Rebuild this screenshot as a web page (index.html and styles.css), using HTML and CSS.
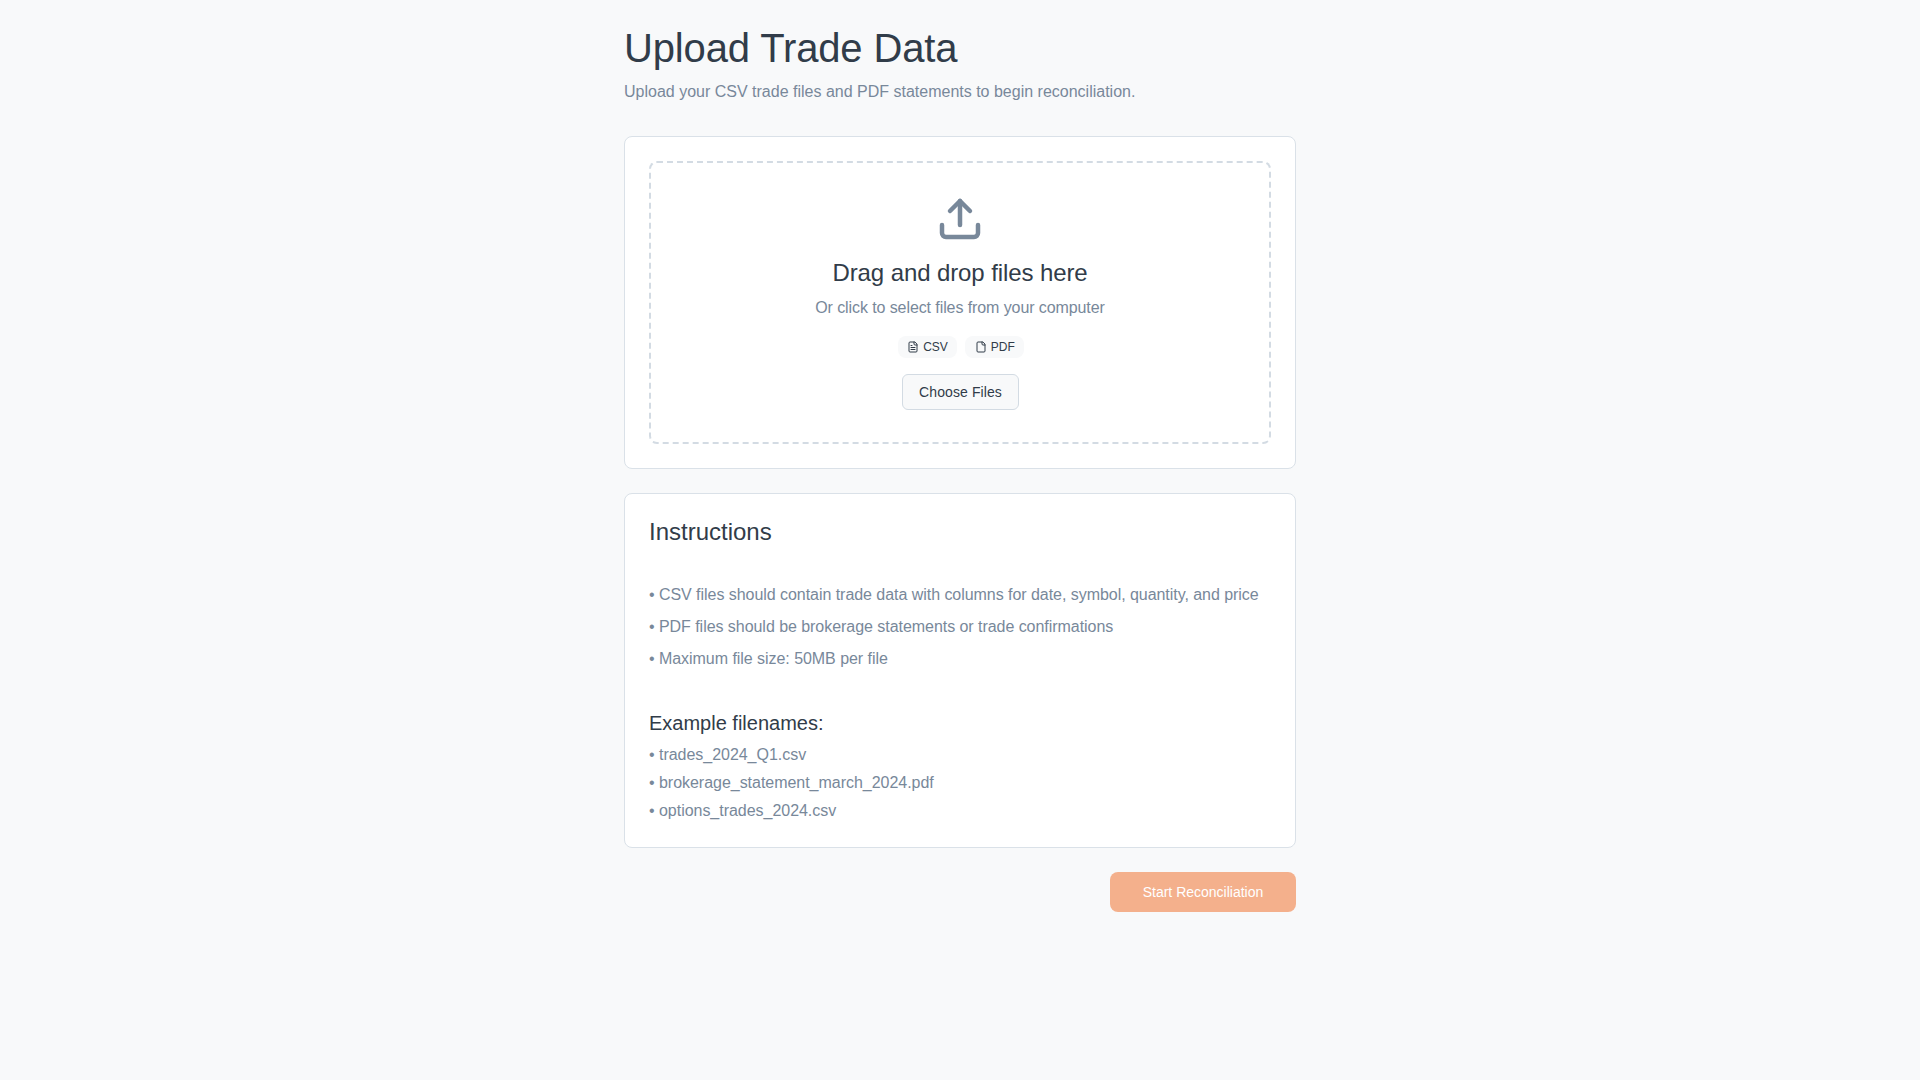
FILE: index.html
```html
<!DOCTYPE html>
<html lang="en">
<head>
    <meta charset="UTF-8">
    <title>Upload Trade Data</title>
    <link rel="stylesheet" href="styles.css">
</head>
<body>
    <main class="page">
        <h1 class="page-title">Upload Trade Data</h1>
        <p class="page-sub">Upload your CSV trade files and PDF statements to begin reconciliation.</p>

        <section class="card">
            <div class="dropzone">
                <svg class="upload-icon" viewBox="0 0 24 24" fill="none" stroke="currentColor" stroke-width="2.25" stroke-linecap="round" stroke-linejoin="round">
                    <path d="M21 15v4a2 2 0 0 1-2 2H5a2 2 0 0 1-2-2v-4"/>
                    <polyline points="17 8 12 3 7 8"/>
                    <line x1="12" y1="3" x2="12" y2="15"/>
                </svg>
                <h3 class="drop-title">Drag and drop files here</h3>
                <p class="drop-sub">Or click to select files from your computer</p>
                <div class="chips">
                    <span class="chip">
                        <svg class="chip-icon" viewBox="0 0 24 24" fill="none" stroke="currentColor" stroke-width="2" stroke-linecap="round" stroke-linejoin="round">
                            <path d="M15 2H6a2 2 0 0 0-2 2v16a2 2 0 0 0 2 2h12a2 2 0 0 0 2-2V7Z"/>
                            <path d="M14 2v4a2 2 0 0 0 2 2h4"/>
                            <path d="M10 9H8"/>
                            <path d="M16 13H8"/>
                            <path d="M16 17H8"/>
                        </svg>
                        CSV
                    </span>
                    <span class="chip">
                        <svg class="chip-icon" viewBox="0 0 24 24" fill="none" stroke="currentColor" stroke-width="2" stroke-linecap="round" stroke-linejoin="round">
                            <path d="M15 2H6a2 2 0 0 0-2 2v16a2 2 0 0 0 2 2h12a2 2 0 0 0 2-2V7Z"/>
                            <path d="M14 2v4a2 2 0 0 0 2 2h4"/>
                        </svg>
                        PDF
                    </span>
                </div>
                <button class="choose-btn">Choose Files</button>
            </div>
        </section>

        <section class="card">
            <h2 class="card-title">Instructions</h2>
            <ul class="rules">
                <li>• CSV files should contain trade data with columns for date, symbol, quantity, and price</li>
                <li>• PDF files should be brokerage statements or trade confirmations</li>
                <li>• Maximum file size: 50MB per file</li>
            </ul>
            <h3 class="examples-title">Example filenames:</h3>
            <ul class="examples">
                <li>• trades_2024_Q1.csv</li>
                <li>• brokerage_statement_march_2024.pdf</li>
                <li>• options_trades_2024.csv</li>
            </ul>
        </section>

        <div class="actions">
            <button class="start-btn" disabled>Start Reconciliation</button>
        </div>
    </main>
</body>
</html>
```

FILE: styles.css
```css
* {
    box-sizing: border-box;
}
body {
    margin: 0;
    min-height: 100vh;
    background: #f8f9fa;
    color: #313c49;
    font-family: "Liberation Sans", Arial, sans-serif;
    font-size: 16px;
    line-height: 24px;
}
h1, h2, h3, p, ul {
    margin: 0;
    padding: 0;
    font-weight: 400;
}
ul {
    list-style: none;
}
.page {
    width: 672px;
    margin: 0 auto;
    padding-top: 24px;
}
.page-title {
    font-size: 40px;
    line-height: 48px;
    letter-spacing: -0.14px;
}
.page-sub {
    margin-top: 8px;
    margin-bottom: 32px;
    color: #78889a;
}
.card {
    background: #fff;
    border: 1px solid #dae1e8;
    border-radius: 8px;
    padding: 24px;
    margin-bottom: 24px;
}
.dropzone {
    display: flex;
    flex-direction: column;
    align-items: center;
    padding: 32px;
    border: 2px dashed #d3dbe3;
    border-radius: 8px;
}
.upload-icon {
    width: 48px;
    height: 48px;
    color: #78889a;
    margin-bottom: 16px;
}
.drop-title {
    font-size: 24px;
    line-height: 1.2;
    margin-bottom: 8px;
    letter-spacing: -0.1px;
}
.drop-sub {
    color: #78889a;
    margin-bottom: 16px;
    letter-spacing: -0.09px;
}
.chips {
    display: flex;
    gap: 8px;
    margin-left: 2px;
    margin-bottom: 16px;
}
.chip {
    display: flex;
    align-items: center;
    gap: 4px;
    height: 22px;
    padding: 0 9.5px;
    background: #f8f9fa;
    border-radius: 8px;
    font-size: 12px;
    line-height: 16px;
}
.chip-icon {
    width: 12px;
    height: 12px;
}
.choose-btn {
    height: 36px;
    margin-left: 1px;
    padding: 0 16px;
    background: #f8f9fa;
    border: 1px solid #d3dbe3;
    border-radius: 6px;
    color: #313c49;
    font-family: inherit;
    font-size: 14px;
    letter-spacing: 0.1px;
}
.card-title {
    font-size: 24px;
    line-height: 1.2;
    margin-bottom: 36px;
}
.rules li {
    margin-bottom: 8px;
    color: #78889a;
    letter-spacing: -0.045px;
}
.examples-title {
    font-size: 20px;
    line-height: 1.2;
    margin-top: 40px;
    margin-bottom: 8px;
}
.examples li {
    margin-bottom: 4px;
    color: #78889a;
    letter-spacing: -0.03px;
}
.examples li:last-child {
    margin-bottom: 0;
}
.actions {
    display: flex;
    justify-content: flex-end;
}
.start-btn {
    width: 186px;
    height: 40px;
    background: #f4b08c;
    border: none;
    border-radius: 8px;
    color: #fff;
    font-family: inherit;
    font-size: 14px;
}
```
